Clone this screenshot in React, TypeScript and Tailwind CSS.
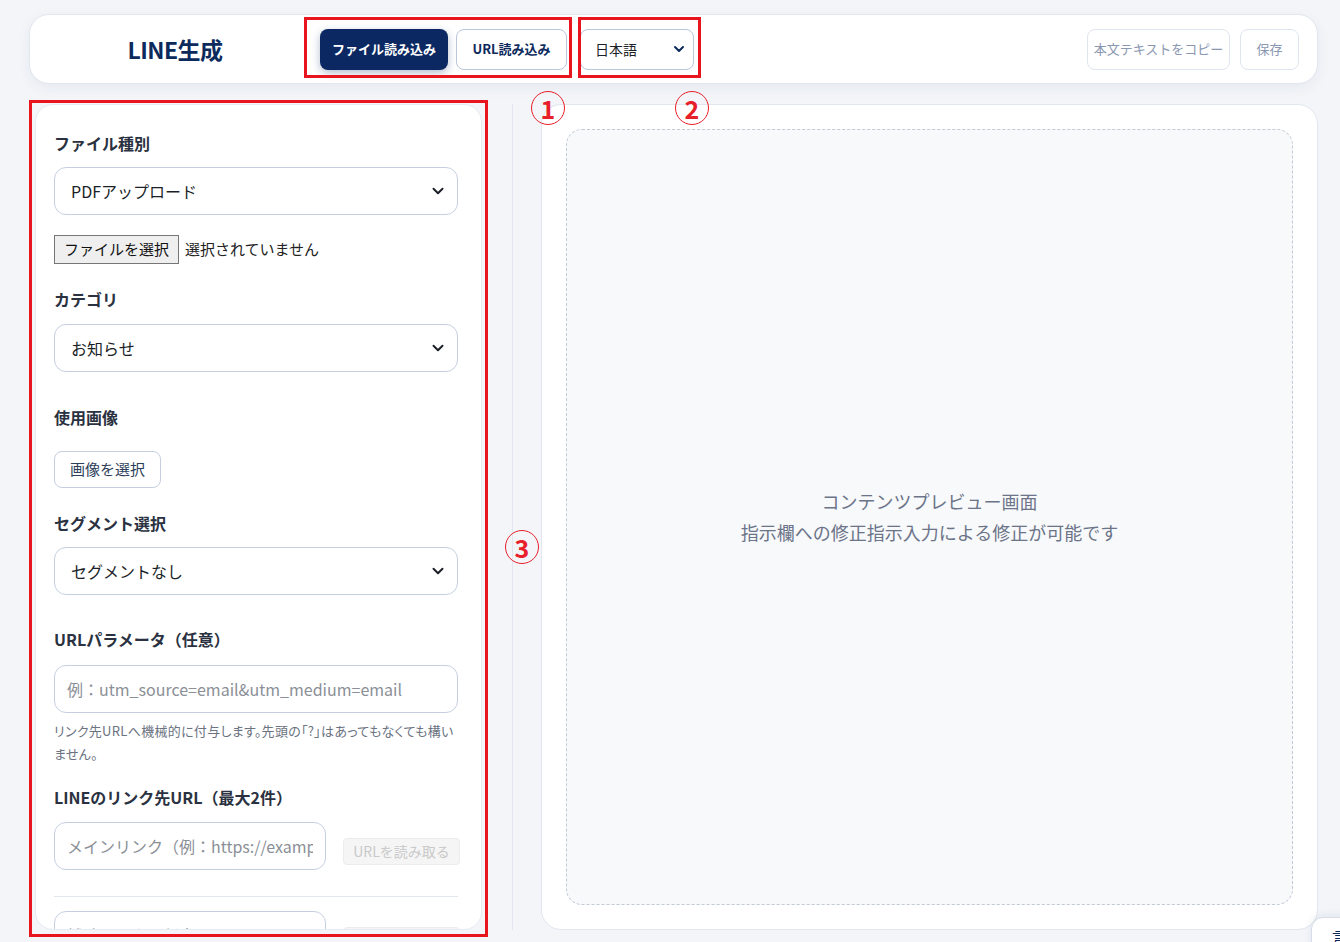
import { ChevronDown } from "lucide-react";

const jp = "font-['Noto_Sans_CJK_JP','Noto_Sans',sans-serif]";

function SelectBox({ value, className = "" }: { value: string; className?: string }) {
  return (
    <div
      className={`flex h-[48px] items-center justify-between rounded-xl border border-[#c5cfdf] bg-white pl-[16px] pr-[10px] text-[16px] text-[#1b1f27] ${className}`}
    >
      <span>{value}</span>
      <ChevronDown className="h-[18px] w-[18px] text-[#1b1f27]" strokeWidth={2.6} />
    </div>
  );
}

function Label({ children, className = "" }: { children: React.ReactNode; className?: string }) {
  return <p className={`text-[16px] font-bold leading-6 text-[#2a3140] ${className}`}>{children}</p>;
}

function Marker({ n, className }: { n: string; className: string }) {
  return (
    <span
      className={`absolute flex h-[34px] w-[34px] items-center justify-center rounded-full border-[1.5px] border-[#e8202a] text-[25px] font-bold leading-none text-[#e8202a] ${className}`}
    >
      {n}
    </span>
  );
}

function LinkRow({ placeholder, className = "" }: { placeholder: string; className?: string }) {
  return (
    <div className={`flex items-end gap-[17px] ${className}`}>
      <div className="flex h-[48px] w-[272px] shrink-0 items-center rounded-xl border border-[#c5cfdf] bg-white pl-[12px] pr-[12px] text-[16px] text-[#8b8f97]">
        <span className="block w-full overflow-hidden whitespace-nowrap">{placeholder}</span>
      </div>
      <button className="mb-[5px] h-[27px] w-[117px] shrink-0 rounded border border-[#ececec] bg-[#f5f5f5] text-[14px] text-[#c9c9c9]">
        URLを読み取る
      </button>
    </div>
  );
}

export default function App() {
  return (
    <div className={`relative h-[942px] overflow-hidden bg-[#f3f5f9] ${jp}`}>
      {/* header */}
      <div className="pl-[29px] pr-[22px] pt-[14px]">
        <header className="flex h-[70px] items-center rounded-[20px] border border-[#e1e6ef] bg-white pr-[18px] shadow-[0_4px_14px_rgba(30,50,90,0.06)]">
          <h1 className="w-[290px] text-center text-[23px] font-bold tracking-tight text-[#0c2a5c]">LINE生成</h1>
          <div className="flex items-center gap-2">
            <button className="h-[41px] w-[128px] rounded-lg bg-[#0b2863] text-[13px] font-bold text-white shadow-[0_3px_8px_rgba(11,40,99,0.3)]">
              ファイル読み込み
            </button>
            <button className="h-[41px] w-[111px] rounded-lg border border-[#b9c6dc] bg-white text-[13px] font-bold text-[#0c2a5c]">
              URL読み込み
            </button>
          </div>
          <div className="ml-[13px] flex h-[41px] w-[114px] items-center justify-between rounded-lg border border-[#b9c6dc] bg-white pl-[14px] pr-[6px] text-[14px] text-[#1b1f27]">
            <span>日本語</span>
            <ChevronDown className="h-[16px] w-[16px] text-[#0c2a5c]" strokeWidth={3} />
          </div>
          <div className="ml-auto flex items-center gap-[10px]">
            <button className="h-[41px] w-[143px] rounded-lg border border-[#dfe5ee] bg-white text-[13px] text-[#8a97b0]">
              本文テキストをコピー
            </button>
            <button className="h-[41px] w-[59px] rounded-lg border border-[#dfe5ee] bg-white text-[13px] text-[#8a97b0]">
              保存
            </button>
          </div>
        </header>
      </div>

      {/* main */}
      <div className="mt-[20px] flex pl-[35px] pr-[22px]">
        <section className="h-[826px] w-[447px] shrink-0 overflow-hidden rounded-[18px] border border-[#e6eaf1] bg-white pl-[18px] pr-[23px] pt-[26px]">
          <Label>ファイル種別</Label>
          <SelectBox value="PDFアップロード" className="mt-[12px]" />
          <div className="mt-[20px] flex items-center gap-[6px]">
            <span className="flex h-[29px] items-center border border-[#767676] bg-[#efefef] px-[9px] text-[15px] text-[#111]">
              ファイルを選択
            </span>
            <span className="text-[15px] text-[#222]">選択されていません</span>
          </div>
          <Label className="mt-[23px]">カテゴリ</Label>
          <SelectBox value="お知らせ" className="mt-[13px]" />
          <Label className="mt-[33px]">使用画像</Label>
          <button className="mt-[22px] h-[37px] w-[107px] rounded-lg border border-[#c5cfdf] bg-white text-[15px] text-[#2c3e5a]">
            画像を選択
          </button>
          <Label className="mt-[23px]">セグメント選択</Label>
          <SelectBox value="セグメントなし" className="mt-[12px]" />
          <Label className="mt-[32px]">URLパラメータ（任意）</Label>
          <div className="mt-[14px] flex h-[48px] items-center rounded-xl border border-[#c5cfdf] bg-white pl-[12px] text-[16px] text-[#8b8f97]">
            例：utm_source=email&amp;utm_medium=email
          </div>
          <p className="mt-[6px] text-[13px] leading-[23px] tracking-[0.3px] text-[#6b7280] [font-feature-settings:'palt']">
            リンク先URLへ機械的に付与します。先頭の「?」はあってもなくても構いません。
          </p>
          <Label className="mt-[20px]">LINEのリンク先URL（最大2件）</Label>
          <LinkRow placeholder="メインリンク（例：https://example.com）" className="mt-[13px]" />
          <div className="mt-[26px] border-t border-[#e3e7ee]" />
          <LinkRow placeholder="補助リンク（任意）" className="mt-[14px]" />
        </section>

        <div className="ml-[30px] h-[826px] w-px shrink-0 bg-[#e2e6ee]" />

        <section className="ml-[28px] h-[826px] flex-1 rounded-[20px] border border-[#e1e6ef] bg-white p-6">
          <div className="flex h-full flex-col items-center justify-center rounded-2xl border border-dashed border-[#c3cad6] bg-[#f8f9fb] text-[18px] leading-[31px] text-[#6b7488]">
            <p>コンテンツプレビュー画面</p>
            <p>指示欄への修正指示入力による修正が可能です</p>
          </div>
        </section>
      </div>

      {/* floating tab bottom-right */}
      <div className="absolute left-[1311px] top-[917px] h-[40px] w-[60px] rounded-tl-xl border border-[#d6dce8] bg-white pl-[20px] pt-[8px] text-[15px] text-[#0c2a5c] shadow-[0_-2px_8px_rgba(30,50,90,0.08)]">
        言語
      </div>

      {/* annotations */}
      <div className="pointer-events-none absolute left-[304px] top-[17px] h-[61px] w-[268px] border-[3px] border-[#e8141e]" />
      <div className="pointer-events-none absolute left-[578px] top-[17px] h-[61px] w-[123px] border-[3px] border-[#e8141e]" />
      <div className="pointer-events-none absolute left-[29px] top-[100px] h-[837px] w-[459px] border-[3px] border-[#e8141e]" />
      <Marker n="1" className="left-[531px] top-[91px]" />
      <Marker n="2" className="left-[675px] top-[91px]" />
      <Marker n="3" className="left-[505px] top-[530px]" />
    </div>
  );
}
